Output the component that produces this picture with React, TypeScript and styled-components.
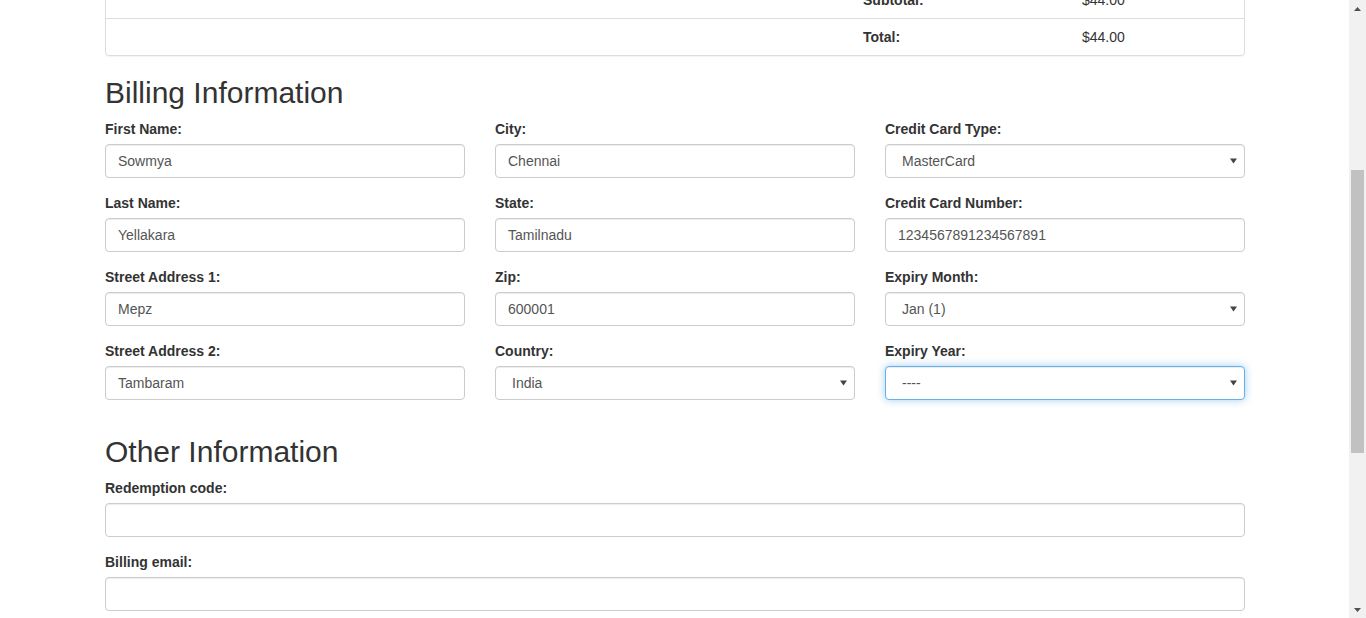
import React, { useLayoutEffect, useRef } from 'react';
import styled, { createGlobalStyle } from 'styled-components';

const GlobalStyle = createGlobalStyle`
  html, body {
    margin: 0;
    padding: 0;
    overflow: hidden;
  }
  body {
    font-family: "Liberation Sans", Arial, Helvetica, sans-serif;
    font-size: 14px;
    line-height: 1.42857143;
    color: #333;
    background: #fff;
  }
  * {
    box-sizing: border-box;
  }
`;

type Field = {
  label: string;
  value: string;
  select?: boolean;
  focused?: boolean;
};

const columns: Field[][] = [
  [
    { label: 'First Name:', value: 'Sowmya' },
    { label: 'Last Name:', value: 'Yellakara' },
    { label: 'Street Address 1:', value: 'Mepz' },
    { label: 'Street Address 2:', value: 'Tambaram' },
  ],
  [
    { label: 'City:', value: 'Chennai' },
    { label: 'State:', value: 'Tamilnadu' },
    { label: 'Zip:', value: '600001' },
    { label: 'Country:', value: 'India', select: true },
  ],
  [
    { label: 'Credit Card Type:', value: 'MasterCard', select: true },
    { label: 'Credit Card Number:', value: '1234567891234567891' },
    { label: 'Expiry Month:', value: 'Jan (1)', select: true },
    { label: 'Expiry Year:', value: '----', select: true, focused: true },
  ],
];

const SelectField = ({ value, focused }: { value: string; focused?: boolean }) => (
  <StyledSelectWrap>
    <StyledSelect defaultValue={value} focused={focused ? 'true' : ''}>
      <option>{value}</option>
    </StyledSelect>
    <StyledCaret width="7" height="6" viewBox="0 0 7 6">
      <path d="M0 0.5 L7 0.5 L3.5 5.5 Z" fill="#444" />
    </StyledCaret>
  </StyledSelectWrap>
);

const App = () => {
  const viewRef = useRef<HTMLDivElement>(null);

  // the page is shown scrolled down a little, past the top of the order table
  useLayoutEffect(() => {
    if (viewRef.current) {
      viewRef.current.scrollTop = 39;
    }
  }, []);

  return (
    <StyledWindow>
      <GlobalStyle />
      <StyledViewport ref={viewRef}>
        <StyledContainer>
          <StyledPanel>
            <StyledTableRow>
              <span />
              <StyledTotalLabel>Subtotal:</StyledTotalLabel>
              <StyledTotalValue>$44.00</StyledTotalValue>
            </StyledTableRow>
            <StyledTableRow>
              <span />
              <StyledTotalLabel>Total:</StyledTotalLabel>
              <StyledTotalValue>$44.00</StyledTotalValue>
            </StyledTableRow>
          </StyledPanel>

          <StyledHeading>Billing Information</StyledHeading>
          <StyledRow>
            {columns.map((col, i) => (
              <StyledCol key={i}>
                {col.map((f) => (
                  <StyledFormGroup key={f.label}>
                    <StyledLabel>{f.label}</StyledLabel>
                    {f.select ? (
                      <SelectField value={f.value} focused={f.focused} />
                    ) : (
                      <StyledInput type="text" defaultValue={f.value} />
                    )}
                  </StyledFormGroup>
                ))}
              </StyledCol>
            ))}
          </StyledRow>

          <StyledHeading>Other Information</StyledHeading>
          <StyledFormGroup>
            <StyledLabel>Redemption code:</StyledLabel>
            <StyledInput type="text" defaultValue="" />
          </StyledFormGroup>
          <StyledFormGroup>
            <StyledLabel>Billing email:</StyledLabel>
            <StyledInput type="text" defaultValue="" />
          </StyledFormGroup>
        </StyledContainer>
      </StyledViewport>

      <StyledScrollbar>
        <StyledArrow>
          <svg width="7" height="4" viewBox="0 0 7 4">
            <path d="M3.5 0 L7 4 L0 4 Z" fill="#505050" />
          </svg>
        </StyledArrow>
        <StyledTrack>
          <StyledThumb />
        </StyledTrack>
        <StyledArrow>
          <svg width="7" height="4" viewBox="0 0 7 4">
            <path d="M0 0 L7 0 L3.5 4 Z" fill="#505050" />
          </svg>
        </StyledArrow>
      </StyledScrollbar>
    </StyledWindow>
  );
};

const StyledWindow = styled.div`
  display: flex;
  width: 100vw;
  height: 618px;
`;

const StyledViewport = styled.div`
  flex: 1;
  height: 100%;
  overflow: hidden;
`;

const StyledContainer = styled.div`
  width: 1170px;
  margin: 0 89px 0 90px;
  padding: 20px 15px 200px;
`;

const StyledPanel = styled.div`
  border: 1px solid #ddd;
  border-radius: 4px;
  margin-bottom: 20px;
  box-shadow: 0 1px 1px rgba(0, 0, 0, 0.05);
`;

const StyledTableRow = styled.div`
  display: grid;
  grid-template-columns: 749px 219px 1fr;
  & + & {
    border-top: 1px solid #ddd;
  }
`;

const StyledTotalLabel = styled.div`
  padding: 8px;
  font-weight: bold;
`;

const StyledTotalValue = styled.div`
  padding: 8px;
`;

const StyledHeading = styled.h2`
  font-size: 30px;
  font-weight: 500;
  line-height: 1.1;
  margin: 20px 0 10px;
  color: #333;
`;

const StyledRow = styled.div`
  display: flex;
  margin: 0 -15px;
`;

const StyledCol = styled.div`
  width: 390px;
  padding: 0 15px;
`;

const StyledFormGroup = styled.div`
  margin-bottom: 15px;
`;

const StyledLabel = styled.label`
  display: block;
  font-weight: bold;
  margin-bottom: 5px;
`;

const StyledInput = styled.input`
  display: block;
  width: 100%;
  height: 34px;
  padding: 6px 12px;
  font-family: inherit;
  font-size: 14px;
  line-height: 1.42857143;
  color: #555;
  background: #fff;
  border: 1px solid #ccc;
  border-radius: 4px;
  box-shadow: inset 0 1px 1px rgba(0, 0, 0, 0.075);
  outline: none;
`;

const StyledSelectWrap = styled.div`
  position: relative;
`;

const StyledSelect = styled.select<{ focused: string }>`
  display: block;
  width: 100%;
  height: 34px;
  padding: 6px 24px 6px 16px;
  font-family: inherit;
  font-size: 14px;
  color: #555;
  background: #fff;
  appearance: none;
  -webkit-appearance: none;
  border: 1px solid ${({ focused }) => (focused ? '#66afe9' : '#ccc')};
  border-radius: 4px;
  box-shadow: ${({ focused }) =>
    focused
      ? 'inset 0 1px 1px rgba(0,0,0,.075), 0 0 8px rgba(102,175,233,.6)'
      : 'inset 0 1px 1px rgba(0,0,0,.075)'};
  outline: none;
`;

const StyledCaret = styled.svg`
  position: absolute;
  right: 8px;
  top: 14px;
  pointer-events: none;
`;

const StyledScrollbar = styled.div`
  width: 17px;
  height: 100%;
  display: flex;
  flex-direction: column;
  background: #f1f1f1;
`;

const StyledArrow = styled.div`
  height: 17px;
  display: flex;
  align-items: center;
  justify-content: center;
`;

const StyledTrack = styled.div`
  flex: 1;
  padding: 153px 2px 0;
`;

const StyledThumb = styled.div`
  height: 283px;
  background: #c1c1c1;
`;

export default App;
